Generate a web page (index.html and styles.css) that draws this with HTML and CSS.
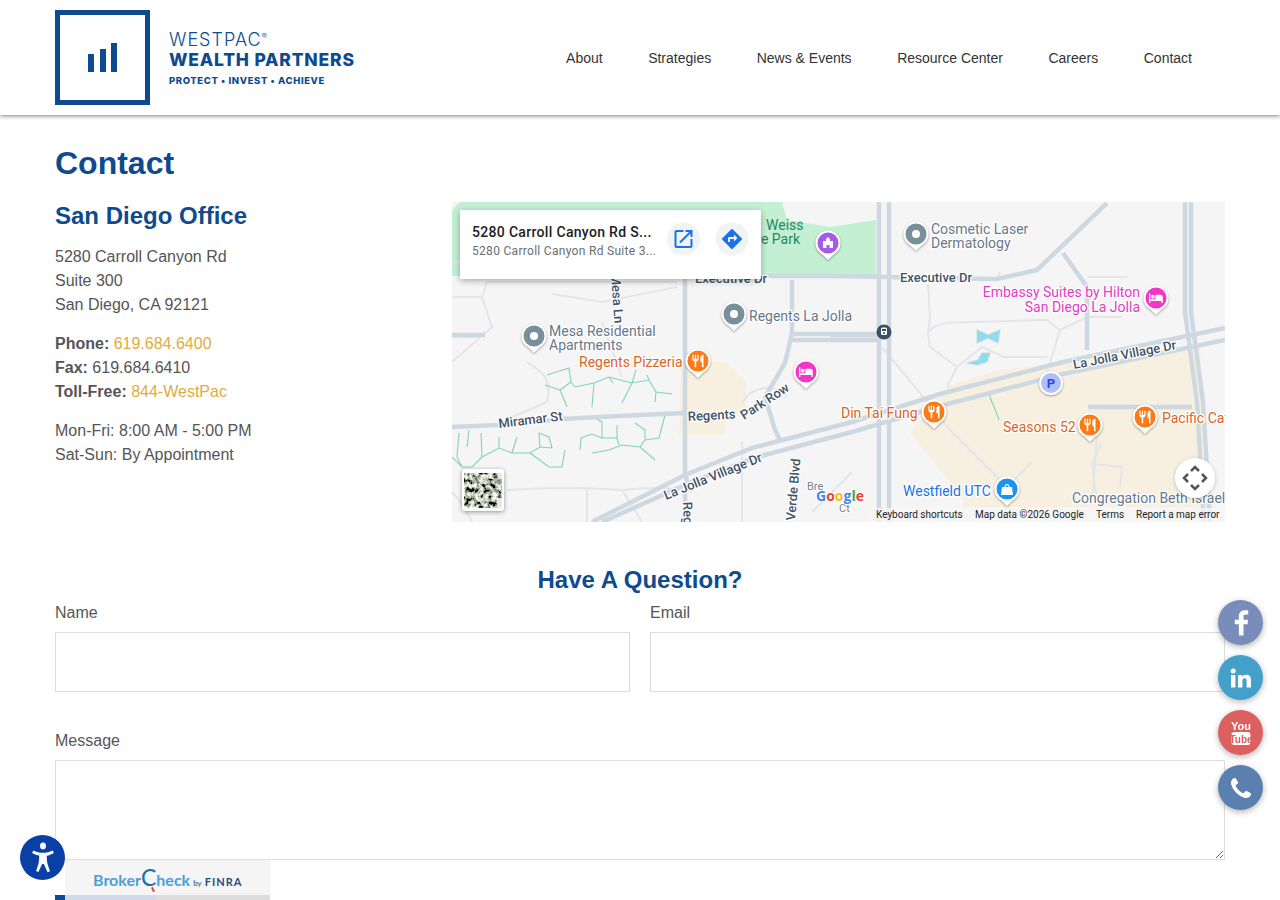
FILE: index.html
```html
<!DOCTYPE html>
<html lang="en">
<head>
    <meta charset="UTF-8">
    <meta name="viewport" content="width=device-width, initial-scale=1.0">
    <title>Contact - WestPac Wealth Partners</title>
    <link rel="stylesheet" href="styles.css">
</head>
<body>

    <header class="site-header">
        <a class="logo" href="#">
            <span class="logo-box">
                <span class="logo-bar bar-1"></span>
                <span class="logo-bar bar-2"></span>
                <span class="logo-bar bar-3"></span>
            </span>
            <span class="logo-text">
                <span class="logo-top">WESTPAC<sup>®</sup></span>
                <span class="logo-main">WEALTH PARTNERS</span>
                <span class="logo-tag">PROTECT • INVEST • ACHIEVE</span>
            </span>
        </a>
        <nav class="main-nav">
            <a href="#">About</a>
            <a href="#">Strategies</a>
            <a href="#">News &amp; Events</a>
            <a href="#">Resource Center</a>
            <a href="#">Careers</a>
            <a href="#">Contact</a>
        </nav>
    </header>

    <main class="content">
        <h1>Contact</h1>

        <div class="office">
            <div class="office-info">
                <h2>San Diego Office</h2>
                <p>5280 Carroll Canyon Rd<br>Suite 300<br>San Diego, CA 92121</p>
                <p><b>Phone:</b> <a href="#">619.684.6400</a><br><b>Fax:</b> 619.684.6410<br><b>Toll-Free:</b> <a href="#">844-WestPac</a></p>
                <p>Mon-Fri: 8:00 AM - 5:00 PM<br>Sat-Sun: By Appointment</p>
            </div>

            <svg class="map" viewBox="0 0 773 320" width="773" height="320">
                <defs>
                    <g id="pin">
                        <path class="pin-back" d="M-12.5 0a12.5 12.5 0 0 1 25 0c0 6-3.5 9.500-7 11.500L0 17l-5.500-5.500C-9 9.500-12.500 6-12.500 0z"/>
                        <circle r="10.500" fill="currentColor"/>
                    </g>
                    <path id="fork" d="M11 9H9V2H7v7H5V2H3v7c0 2.120 1.660 3.840 3.750 3.970V22h2.500v-9.030C11.340 12.840 13 11.120 13 9V2h-2v7zm5-3v8h2.500v8H21V2c-2.760 0-5 2.240-5 4z"/>
                    <path id="bed" d="M7 13c1.660 0 3-1.340 3-3S8.660 7 7 7s-3 1.340-3 3 1.340 3 3 3zm12-6h-8v7H3V5H1v15h2v-3h18v3h2v-9c0-2.210-1.790-4-4-4z"/>
                    <filter id="satellite" x="0" y="0" width="100%" height="100%">
                        <feTurbulence type="fractalNoise" baseFrequency=".22" numOctaves="3" seed="7"/>
                        <feColorMatrix type="matrix" values="2.6 0 0 0 -.85  2.6 0 0 0 -.82  2.4 0 0 0 -.8  0 0 0 0 1"/>
                    </filter>
                </defs>

                <rect class="land" width="773" height="320"/>
                <path class="park" d="M8 0H330l5 18 43 7 46-7v56H0V8z"/>
                <path class="mall" d="M229 160l45 0 20 20 0 30-20 5-2 18-45 0z"/>
                <path class="mall" d="M458 231l40-48 50-15 200-23 5 160H511v-12l-15-15z"/>

                <!-- small streets -->
                <g class="minor">
                    <path d="M0 60H60M0 95H30L35 80H157M157 80H225M30 95L40 125L0 160M100 92L150 100L225 85"/>
                    <path d="M0 290C10 300 15 310 20 320M55 288C100 285 130 285 170 288L190 320M135 288V320M170 288C200 285 220 285 240 290"/>
                    <path d="M75 160C90 170 100 175 95 200L60 215M150 120L170 175M-5 135H30"/>
                    <path d="M290 200C300 185 320 180 335 195M290 240V320M360 310L400 270"/>
                    <path d="M476 132L478 115M478 115L476 82M476 132C480 120 500 120 520 120L595 118L608 128L595 170M608 128L635 115H655M476 132L478 145L505 165L495 185M505 165L530 145L552 155H595M545 77L548 70"/>
                    <path d="M430 145L500 230L555 285L580 260M650 240L640 262L670 265L668 285M640 262L645 300"/>
                    <path d="M640 115H670M636 75H675M645 235L640 300"/>
                </g>

                <!-- streams -->
                <g class="stream">
                    <path d="M95 173L117 166L119 180L108 188L115 205M93 183L108 188M119 180L123 185L142 181L157 175L180 181L197 178L204 190L220 192M197 178L195 173M142 181L140 205M157 175L161 181M180 181L170 201M180 181L184 168M204 190L203 200"/>
                    <path d="M0 255L10 265L20 265L30 255L47 246L60 251L78 251L88 245L100 246M78 251L97 265L110 265L113 248M88 245L87 231L97 235L100 246M30 255L29 231M47 246V235M60 251L65 235M15 245L17 228M10 265L5 255L7 231"/>
                    <path d="M128 248L129 236L140 232L150 236L165 236V223M150 236V220L143 216M140 251L157 248L170 243L188 245L203 258M165 236L167 243M188 245L193 238L207 236L213 213M193 238V228L183 221"/>
                    <path d="M537 192C541 205 545 210 547 218"/>
                </g>

                <!-- main roads -->
                <g class="road">
                    <path d="M233 74V270L236 285M233 290V320M427 0V320M437 0V320M0 225L47 223L110 217L167 214L233 211L283 216"/>
                    <path d="M233 74H378L545 77L585 68L655 1M340 78V131L333 161L313 195L323 228L328 238M611 51L635 85V148"/>
                    <path d="M340 132H425M340 138H425M0 133H33M378 133H425"/>
                    <path d="M733 0V110L745 200L752 320M739 0V110L751 200L758 320M636 205H740"/>
                    <path d="M140 320L233 273L300 246L400 220L488 192L611 160L773 126M150 320L240 280L305 255L400 230L488 204L611 172L773 138"/>
                </g>

                <path class="lake" d="M525 128L536 133L548 128L546 141L536 136L525 141zM515 161L526 158L530 151L538 151L535 160L525 163z"/>

                <!-- road names -->
                <text class="street" x="243" y="81">Executive Dr</text>
                <text class="street" x="448" y="80">Executive Dr</text>
                <text class="street" transform="translate(47 226) rotate(-7)">Miramar St</text>
                <text class="street" transform="translate(622 167) rotate(-11)">La Jolla Village Dr</text>
                <text class="street" transform="translate(214 298) rotate(-22)">La Jolla Village Dr</text>
                <text class="street" transform="translate(236 219) rotate(-3)">Regents</text>
                <text class="street" transform="translate(292 218) rotate(-33)">Park Row</text>
                <text class="street" transform="translate(159 72) rotate(86)">Mesa Ln</text>
                <text class="street" transform="translate(231 300) rotate(88)">Regents</text>
                <text class="street" transform="translate(343 319) rotate(-85)">Verde Blvd</text>
                <text class="street-small" x="355" y="288">Bre</text>
                <text class="street-small" x="387" y="310">Ct</text>

                <!-- places -->
                <text class="place park-text" x="314" y="28">Weiss</text>
                <text class="place park-text" x="348" y="42" text-anchor="end">Nature Park</text>
                <text class="place poi" x="97" y="134">Mesa Residential</text>
                <text class="place poi" x="97" y="148">Apartments</text>
                <text class="place poi" x="297" y="119">Regents La Jolla</text>
                <text class="place poi" x="479" y="32">Cosmetic Laser</text>
                <text class="place poi" x="479" y="46">Dermatology</text>
                <text class="place poi" x="620" y="301">Congregation Beth Israel</text>
                <text class="place food" x="127" y="165">Regents Pizzeria</text>
                <text class="place food" x="389" y="216">Din Tai Fung</text>
                <text class="place food" x="551" y="230">Seasons 52</text>
                <text class="place food" x="710" y="221">Pacific Catch</text>
                <text class="place hotel" x="688" y="95" text-anchor="end">Embassy Suites by Hilton</text>
                <text class="place hotel" x="688" y="110" text-anchor="end">San Diego La Jolla</text>
                <text class="place shop" x="451" y="294">Westfield UTC</text>

                <!-- pins -->
                <g class="pin-gray" transform="translate(82 134)"><use href="#pin"/><circle r="4" fill="#fff"/></g>
                <g class="pin-gray" transform="translate(282 112)"><use href="#pin"/><circle r="4" fill="#fff"/></g>
                <g class="pin-gray" transform="translate(464 32)"><use href="#pin"/><circle r="4" fill="#fff"/></g>
                <g class="pin-purple" transform="translate(376 41)"><use href="#pin"/><path class="glyph" d="M-5 5V-2H-2V-4L0-6 2-4V-2H5V5H1.500V2H-1.500V5z"/></g>
                <g class="pin-pink" transform="translate(354 170)"><use href="#pin"/><use class="glyph" href="#bed" transform="translate(-7.500 -7.500) scale(.62)"/></g>
                <g class="pin-pink" transform="translate(704 96)"><use href="#pin"/><use class="glyph" href="#bed" transform="translate(-7.500 -7.500) scale(.62)"/></g>
                <g class="pin-orange" transform="translate(246 159)"><use href="#pin"/><use class="glyph" href="#fork" transform="translate(-7.500 -7.500) scale(.62)"/></g>
                <g class="pin-orange" transform="translate(482 210)"><use href="#pin"/><use class="glyph" href="#fork" transform="translate(-7.500 -7.500) scale(.62)"/></g>
                <g class="pin-orange" transform="translate(638 223)"><use href="#pin"/><use class="glyph" href="#fork" transform="translate(-7.500 -7.500) scale(.62)"/></g>
                <g class="pin-orange" transform="translate(693 215)"><use href="#pin"/><use class="glyph" href="#fork" transform="translate(-7.500 -7.500) scale(.62)"/></g>
                <g class="pin-blue" transform="translate(555 287)"><use href="#pin"/><path class="glyph" d="M-5-2H-2.500C-2.500-6 2.500-6 2.500-2H5L6 6H-6zM-1.500-2H1.500C1.500-4.500-1.500-4.500-1.500-2z"/></g>
                <g transform="translate(599 181)">
                    <circle class="pin-back" r="12"/><circle r="10" fill="#aec1f7"/>
                    <text class="parking" text-anchor="middle" y="5">P</text>
                </g>
                <g transform="translate(432 130)">
                    <circle r="7.500" fill="#3c5166"/>
                    <rect class="glyph" x="-3" y="-4.500" width="6" height="7.500" rx="1.500"/>
                    <rect x="-2" y="-3" width="4" height="2" fill="#3c5166"/>
                    <circle cx="0" cy="1" r="1" fill="#3c5166"/>
                </g>

                <!-- satellite toggle -->
                <rect class="thumb-frame" x="10" y="267" width="42" height="42" rx="3"/>
                <rect x="12" y="271" width="38" height="35" filter="url(#satellite)"/>
                <path fill="#e8e8e6" d="M45 296h5v10h-5zM46 271h4v6h-4z"/>

                <!-- google mark -->
                <text class="google" x="364" y="299"><tspan fill="#4285f4">G</tspan><tspan fill="#ea4335">o</tspan><tspan fill="#fbbc05">o</tspan><tspan fill="#4285f4">g</tspan><tspan fill="#34a853">l</tspan><tspan fill="#ea4335">e</tspan></text>

                <!-- fullscreen control -->
                <circle class="control" cx="743" cy="276" r="20"/>
                <path class="control-arrows" d="M739 269L743 265 747 269M739 283L743 287 747 283M736 272L732 276 736 280M750 272L754 276 750 280"/>

                <!-- attribution -->
                <rect class="attribution" x="418" y="306" width="355" height="14"/>
                <text class="attr-text" x="424" y="316">Keyboard shortcuts</text>
                <text class="attr-text" x="523" y="316">Map data ©2026 Google</text>
                <text class="attr-text" x="644" y="316">Terms</text>
                <text class="attr-text" x="684" y="316">Report a map error</text>

                <!-- address card -->
                <rect class="card" x="8" y="8" width="301" height="69" rx="1"/>
                <text class="card-title" x="20" y="35">5280 Carroll Canyon Rd S...</text>
                <text class="card-sub" x="20" y="53">5280 Carroll Canyon Rd Suite 3...</text>
                <circle class="card-btn" cx="231.500" cy="37" r="16.500"/>
                <circle class="card-btn" cx="280" cy="37" r="16.500"/>
                <path class="card-icon" transform="translate(219.500 25)" d="M19 19H5V5h7V3H5c-1.110 0-2 .9-2 2v14c0 1.100.89 2 2 2h14c1.100 0 2-.9 2-2v-7h-2v7zM14 3v2h3.590l-9.830 9.830 1.410 1.410L19 6.410V10h2V3h-7z"/>
                <path class="card-icon" transform="translate(268 25)" d="M21.710 11.290l-9-9c-.39-.39-1.020-.39-1.410 0l-9 9c-.39.39-.39 1.020 0 1.410l9 9c.39.39 1.020.39 1.410 0l9-9c.39-.38.39-1.010 0-1.410zM14 14.500V12h-4v3H8v-4c0-.55.45-1 1-1h5V7.500l3.500 3.500-3.500 3.500z"/>
            </svg>
        </div>

        <h2 class="question">Have A Question?</h2>
        <form class="contact-form">
            <div class="form-group">
                <label for="name">Name</label>
                <input type="text" id="name">
            </div>
            <div class="form-group">
                <label for="email">Email</label>
                <input type="text" id="email">
            </div>
            <div class="form-group form-wide">
                <label for="message">Message</label>
                <textarea id="message"></textarea>
            </div>
            <button class="btn" type="button">Submit</button>
        </form>
    </main>

    <div class="social">
        <a class="social-btn fb" href="#">
            <svg viewBox="0 0 24 24" width="30" height="30"><path d="M14 22v-9h3.200l.5-3.700H14V7c0-1.100.4-1.800 1.900-1.800h1.900V2c-.4-.1-1.500-.2-2.800-.2-2.800 0-4.700 1.700-4.700 4.800v2.700H7V13h3.300v9z"/></svg>
        </a>
        <a class="social-btn in" href="#">
            <svg viewBox="0 0 24 24" width="24" height="24"><path d="M2 9h4.400v12.500H2zM4.200 2.500a2.500 2.500 0 1 1 0 5 2.500 2.500 0 0 1 0-5zM9 9h4.200v1.800c.7-1.200 2.100-2.100 4.100-2.100 4 0 4.700 2.600 4.700 6.100v6.700h-4.400v-6c0-1.500-.1-3.200-2-3.200s-2.200 1.500-2.200 3.100v6.100H9z"/></svg>
        </a>
        <a class="social-btn yt" href="#">
            <svg viewBox="0 0 20 26" width="20" height="26">
                <text class="yt-you" x="10" y="10" text-anchor="middle">You</text>
                <rect class="yt-box" x=".5" y="12" width="19" height="13" rx="3"/>
                <text class="yt-tube" x="10" y="22.500" text-anchor="middle">Tube</text>
            </svg>
        </a>
        <a class="social-btn ph" href="#">
            <svg viewBox="0 0 1408 1408" width="20" height="20"><path d="M1408 1112q0 27-10 70.500t-21 68.500q-21 50-122 106-94 51-186 51-27 0-53-3.500t-57.500-12.500-47-14.500-55.500-20.500-49-18q-98-35-175-83-127-79-264-216t-216-264q-48-77-83-175-3-9-18-49t-20.500-55.500-14.500-47-12.500-57.500-3.500-53q0-92 51-186 56-101 106-122 25-11 68.500-21t70.500-10q14 0 21 3 18 6 53 76 11 19 30 54t35 63.500 31 53.500q3 4 17.500 25t21.500 35.500 7 28.500q0 20-28.500 50t-62 55-62 53-28.500 46q0 9 5 22.500t8.500 20.500 14 24 11.500 19q76 137 174 235t235 174q2 1 19 11.500t24 14 20.500 8.500 22.500 5q18 0 46-28.500t53-62 55-62 50-28.500q14 0 28.500 7t35.500 21.500 25 17.500q25 15 53.500 31t63.500 35 54 30q70 35 76 53 3 7 3 21z"/></svg>
        </a>
    </div>

    <a class="access-btn" href="#">
        <svg viewBox="0 0 24 24" width="26" height="31" preserveAspectRatio="none">
            <circle cx="12" cy="3" r="2.700"/>
            <path d="M2 8.500L3 6.500C6 7.800 9 8.300 12 8.300s6-.5 9-1.800l1 2c-2.300 1.100-4.500 1.900-6.500 2.200 0 3 .2 5 .9 7l2 5-2.200.8L12.800 17h-1.600l-3.400 6.300-2.200-.8 2-5c.7-2 .9-4 .9-7C6.500 10.200 4.300 9.600 2 8.500z"/>
        </svg>
    </a>

    <a class="broker-check" href="#">
        <span class="bc-logo">
            <span class="bc-broker">Broker</span><span class="bc-c">C</span><span class="bc-broker">heck</span><span class="bc-by">by</span><span class="bc-finra">FINRA</span>
        </span>
        <span class="bc-progress"><span class="bc-fill"></span></span>
    </a>

</body>
</html>
```

FILE: styles.css
```css
html, body {
    margin: 0;
    padding: 0;
}
body {
    font-family: "Liberation Sans", Arial, sans-serif;
    font-size: 16px;
    line-height: 24px;
    color: #555;
    background: #fff;
}
a {
    text-decoration: none;
}

/* header */
.site-header {
    height: 115px;
    box-sizing: border-box;
    padding: 0 88px 0 55px;
    display: flex;
    align-items: center;
    justify-content: space-between;
    box-shadow: 0 1px 4px rgba(0, 0, 0, .5);
}
.logo {
    display: flex;
    align-items: center;
    gap: 19px;
    color: #0e4a8f;
}
.logo-box {
    width: 95px;
    height: 95px;
    box-sizing: border-box;
    border: 5px solid #0e4a8f;
    display: flex;
    align-items: flex-end;
    justify-content: center;
    gap: 5.500px;
    padding-bottom: 28px;
}
.logo-bar {
    width: 6px;
    background: #0e4a8f;
}
.bar-1 { height: 18px; }
.bar-2 { height: 23px; }
.bar-3 { height: 29px; }
.logo-text {
    display: flex;
    flex-direction: column;
    padding-top: 3px;
    font-family: Inter, sans-serif;
}
.logo-top {
    font-size: 18px;
    line-height: 18px;
    font-weight: 300;
    letter-spacing: 1px;
}
.logo-top sup {
    font-size: 8px;
    line-height: 0;
}
.logo-main {
    font-size: 17.500px;
    line-height: 21px;
    font-weight: 800;
    letter-spacing: .8px;
}
.logo-tag {
    font-size: 9.500px;
    line-height: 14px;
    margin-top: 4px;
    font-weight: 800;
    letter-spacing: .6px;
}
.main-nav {
    display: flex;
    gap: 45.500px;
}
.main-nav a {
    font-size: 14px;
    color: #333;
}

/* page */
.content {
    padding: 0 55px;
}
h1 {
    margin: 0;
    padding-top: 29px;
    font-size: 32px;
    line-height: 38px;
    color: #0e4a8f;
}
h2 {
    margin: 0;
    font-size: 24px;
    line-height: 28px;
    color: #0e4a8f;
}
.office {
    margin-top: 20px;
    display: grid;
    grid-template-columns: 377px 773px;
    gap: 20px;
}
.office-info h2 {
    margin-bottom: 15px;
}
.office-info p {
    margin: 0 0 15px;
}
.office-info b {
    font-weight: 700;
}
.office-info a {
    color: #e0ac3c;
}

/* map */
.map {
    display: block;
    font-family: Roboto, sans-serif;
}
.land { fill: #f5f5f5; }
.park { fill: #c3efd3; }
.mall { fill: #f7f0e0; }
.lake {
    fill: #8fdcef;
    stroke: #e6e8ea;
    stroke-width: 2;
    paint-order: stroke;
}
.minor path {
    fill: none;
    stroke: #e3e5e8;
    stroke-width: 2;
}
.stream path {
    fill: none;
    stroke: #84d3b3;
    stroke-width: 1.100;
}
.road path {
    fill: none;
    stroke: #ced8e1;
    stroke-width: 4.500;
}
.street, .street-small, .place {
    paint-order: stroke;
    stroke: #fff;
    stroke-width: 2.500px;
    stroke-linejoin: round;
}
.street {
    font-size: 13px;
    font-weight: 500;
    fill: #3f5267;
}
.street-small {
    font-size: 11px;
    fill: #79828c;
}
.place {
    font-size: 14px;
}
.poi { fill: #66788a; }
.food { fill: #d9661f; }
.hotel { fill: #e43cc4; }
.shop { fill: #1a73e8; }
.park-text { fill: #1f8a5c; stroke: #c3efd3; }
.pin-back {
    fill: #fff;
    filter: drop-shadow(0 1px 1px rgba(0, 0, 0, .35));
}
.glyph { fill: #fff; }
.pin-gray { color: #78909c; }
.pin-purple { color: #a65be8; }
.pin-pink { color: #f236c8; }
.pin-orange { color: #fa7b17; }
.pin-blue { color: #1a94f0; }
.parking {
    font-size: 13px;
    font-weight: 700;
    fill: #3344d8;
}
.thumb-frame {
    fill: #fff;
    filter: drop-shadow(0 1px 2px rgba(0, 0, 0, .4));
}
.google {
    font-family: "Open Sans", sans-serif;
    font-size: 14px;
    font-weight: 700;
    paint-order: stroke;
    stroke: #fff;
    stroke-width: 2px;
}
.control {
    fill: #fff;
    filter: drop-shadow(0 1px 2px rgba(0, 0, 0, .2));
}
.control-arrows {
    fill: none;
    stroke: #555;
    stroke-width: 2.500;
}
.attribution {
    fill: rgba(245, 245, 245, .75);
}
.attr-text {
    font-size: 10px;
    fill: #222;
}
.card {
    fill: #fff;
    filter: drop-shadow(0 2px 3px rgba(0, 0, 0, .3));
}
.card-title {
    font-size: 14px;
    font-weight: 500;
    letter-spacing: .32px;
    fill: #202124;
}
.card-sub {
    font-size: 12px;
    letter-spacing: .3px;
    fill: #6a6e73;
}
.card-btn { fill: #f1f3f4; }
.card-icon { fill: #1a73e8; }

/* form */
.question {
    margin-top: 44px;
    text-align: center;
}
.contact-form {
    margin-top: 10px;
    display: grid;
    grid-template-columns: 1fr 1fr;
    column-gap: 20px;
}
.form-group {
    margin-bottom: 40px;
}
.form-wide {
    grid-column: 1 / 3;
    margin-bottom: 35px;
}
.form-group label {
    display: block;
    margin-top: -3px;
    margin-bottom: 7px;
}
.form-group input, .form-group textarea {
    display: block;
    width: 100%;
    box-sizing: border-box;
    border: 1px solid #ddd;
    background: #fff;
    margin: 0;
    padding: 8px;
}
.form-group input {
    height: 60px;
}
.form-group textarea {
    height: 100px;
}
.btn {
    justify-self: start;
    padding: 14px 40px;
    margin-bottom: 30px;
    background: #0e4a8f;
    color: #fff;
    border: none;
    font-size: 16px;
    font-family: inherit;
}

/* floating buttons */
.social {
    position: fixed;
    top: 600px;
    right: 17px;
    display: flex;
    flex-direction: column;
    gap: 10px;
}
.social-btn {
    width: 45px;
    height: 45px;
    border-radius: 50%;
    display: flex;
    align-items: center;
    justify-content: center;
    box-shadow: 0 2px 6px rgba(0, 0, 0, .3);
}
.social-btn svg { fill: #fff; }
.fb { background: #7a8cb9; }
.in { background: #459fcb; }
.yt { background: #dd6060; }
.ph { background: #5a80b0; }
.yt-you {
    font-family: "Liberation Sans Narrow", "Liberation Sans", sans-serif;
    font-size: 11px;
    font-weight: 700;
}
.yt-tube {
    font-family: "Liberation Sans Narrow", "Liberation Sans", sans-serif;
    font-size: 10px;
    font-weight: 700;
    fill: #dd6060;
}
.access-btn {
    position: fixed;
    left: 20px;
    top: 835px;
    width: 45px;
    height: 45px;
    border-radius: 50%;
    background: #0a3fa5;
    display: flex;
    align-items: center;
    justify-content: center;
}
.access-btn svg { fill: #fff; }
.broker-check {
    position: fixed;
    left: 65px;
    top: 860px;
    width: 205px;
    height: 40px;
    background: #f5f5f5;
}
.bc-logo {
    display: flex;
    align-items: baseline;
    height: 35px;
    line-height: 40px;
    padding-left: 28px;
    font-family: Lato, sans-serif;
}
.bc-broker {
    font-size: 16px;
    font-weight: 700;
    color: #4a9fd8;
}
.bc-c {
    position: relative;
    font-size: 23px;
    line-height: 20px;
    color: #1f6aa5;
}
.bc-c::after {
    content: "";
    position: absolute;
    left: 11px;
    bottom: -5px;
    width: 2px;
    height: 5px;
    background: #e2492f;
    transform: rotate(-25deg);
}
.bc-by {
    font-size: 8px;
    margin-left: 3px;
    color: #1f4e7a;
}
.bc-finra {
    font-size: 11px;
    font-weight: 700;
    letter-spacing: 1px;
    margin-left: 3px;
    color: #1f4e7a;
}
.bc-progress {
    display: block;
    height: 5px;
    background: #ddd;
}
.bc-fill {
    display: block;
    width: 91px;
    height: 5px;
    background: #d0dae8;
}
```
